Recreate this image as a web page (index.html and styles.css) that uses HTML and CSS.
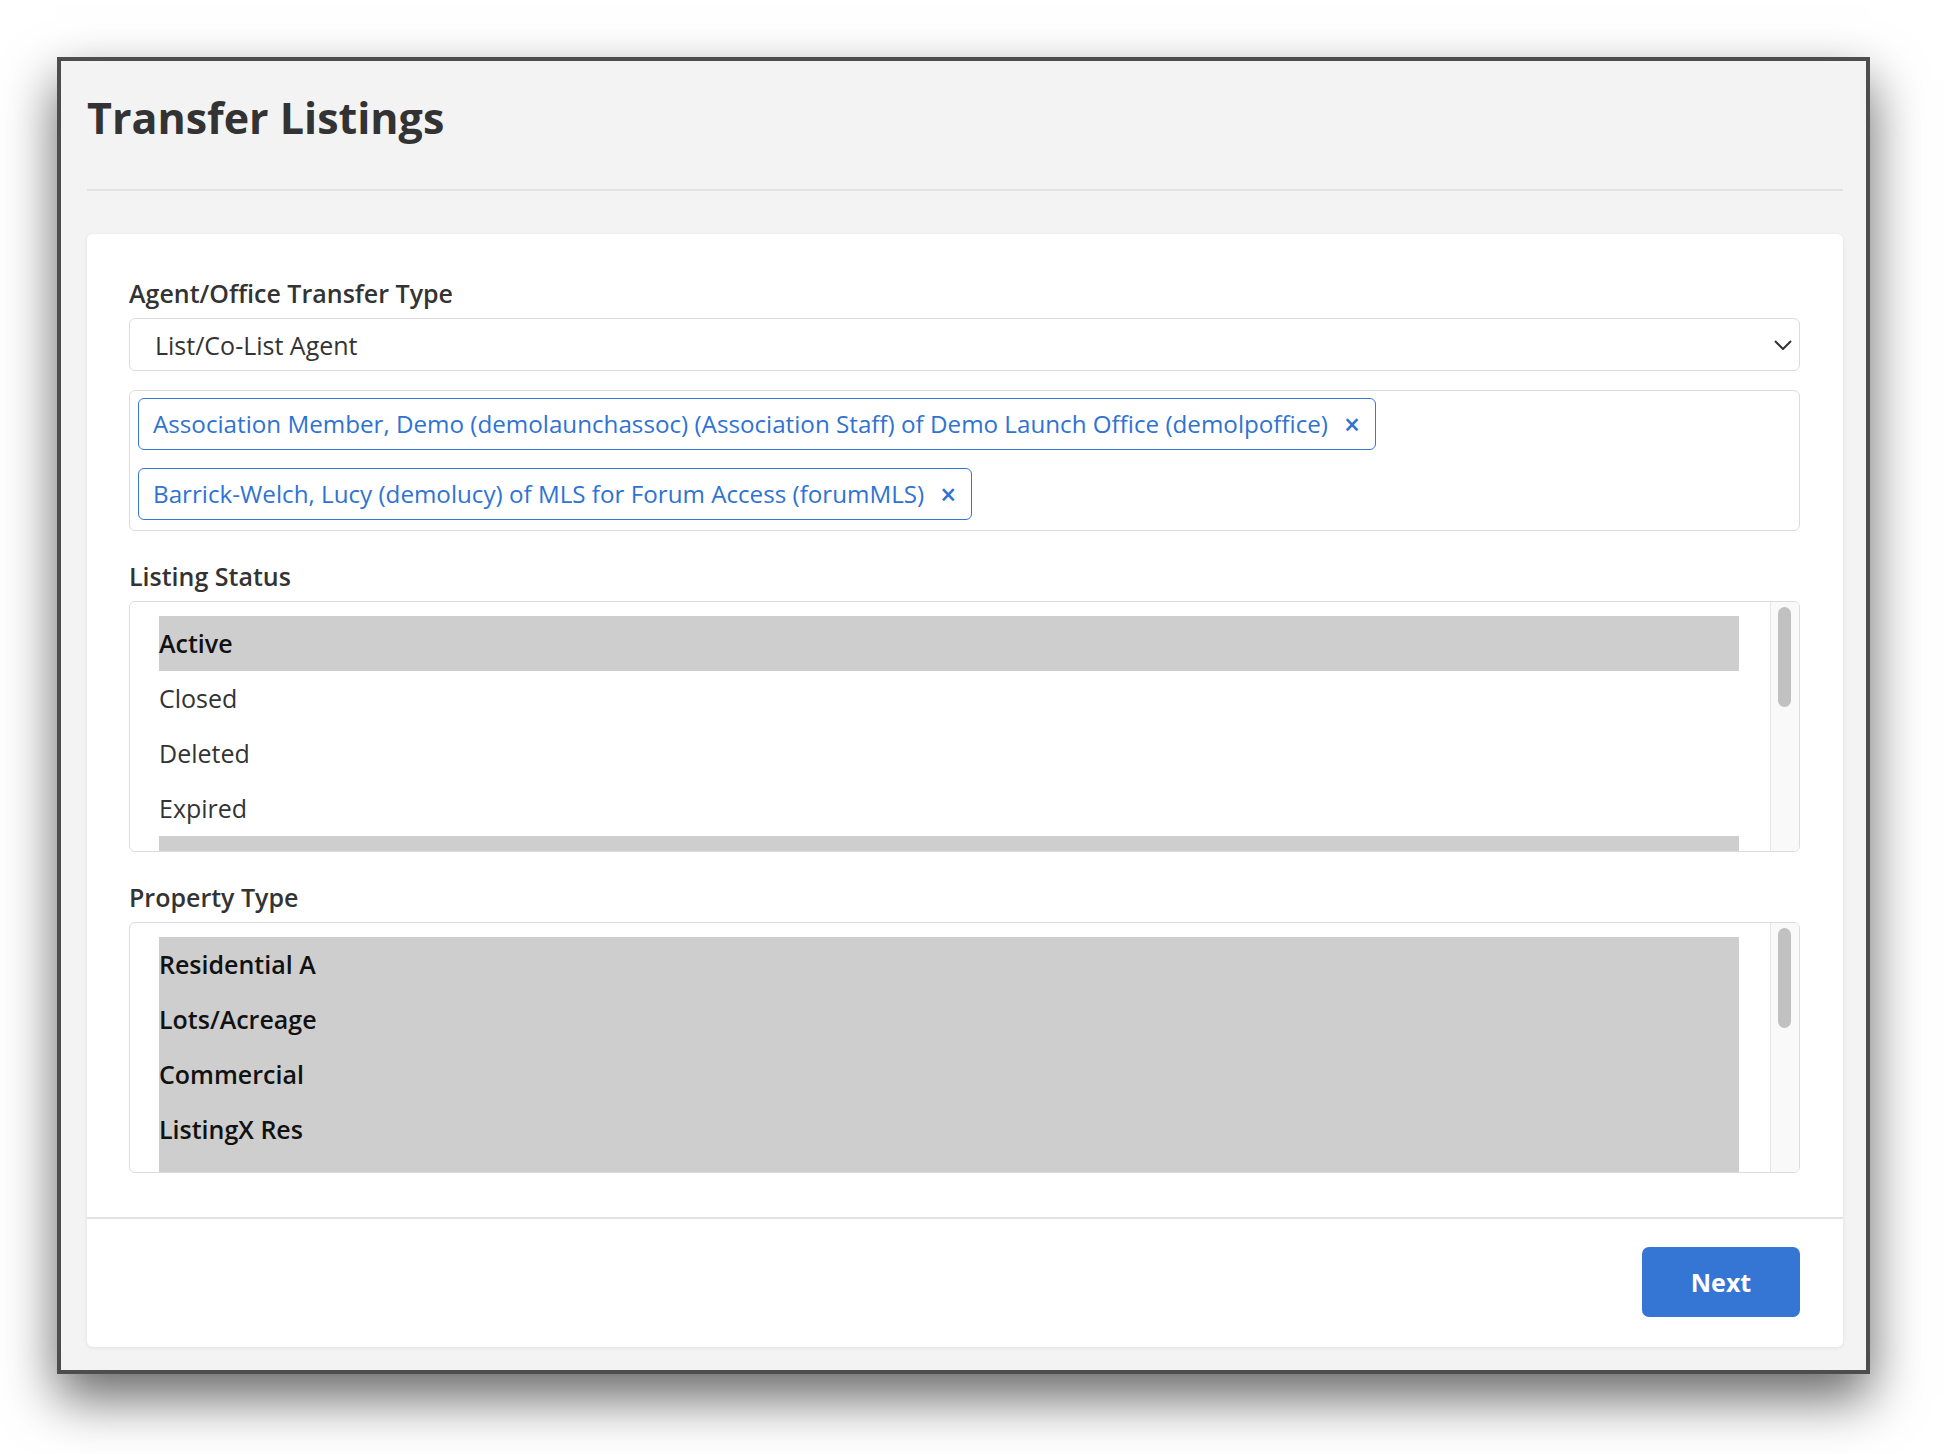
FILE: index.html
```html
<!DOCTYPE html>
<html lang="en">
<head>
<meta charset="UTF-8" />
<title>Transfer Listings</title>
<link rel="stylesheet" href="styles.css">
</head>
<body>
<div class="window">
  <h1 class="page-title">Transfer Listings</h1>
  <div class="divider"></div>

  <div class="card">
    <div class="card-body">
      <!-- тип переноса -->
      <label class="field-label">Agent/Office Transfer Type</label>
      <div class="select">
        <span>List/Co-List Agent</span>
        <svg class="chevron" width="18" height="10" viewBox="0 0 18 10"><path d="M1 1l8 8 8-8" fill="none" stroke="#333" stroke-width="2"/></svg>
      </div>

      <div class="tags">
        <div class="tag"><span>Association Member, Demo (demolaunchassoc) (Association Staff) of Demo Launch Office (demolpoffice)</span><span class="tag-x">&times;</span></div>
        <div class="tag"><span>Barrick-Welch, Lucy (demolucy) of MLS for Forum Access (forumMLS)</span><span class="tag-x">&times;</span></div>
      </div>

      <!-- статусы -->
      <label class="field-label spaced">Listing Status</label>
      <div class="listbox">
        <div class="options">
          <div class="option selected">Active</div>
          <div class="option">Closed</div>
          <div class="option">Deleted</div>
          <div class="option">Expired</div>
          <div class="option selected"></div>
        </div>
        <div class="scroll-track"><div class="scroll-thumb"></div></div>
      </div>

      <!-- типы объектов -->
      <label class="field-label spaced">Property Type</label>
      <div class="listbox">
        <div class="options">
          <div class="option selected">Residential A</div>
          <div class="option selected">Lots/Acreage</div>
          <div class="option selected">Commercial</div>
          <div class="option selected">ListingX Res</div>
          <div class="option selected"></div>
        </div>
        <div class="scroll-track"><div class="scroll-thumb"></div></div>
      </div>
    </div>

    <div class="card-footer">
      <button class="btn-next">Next</button>
    </div>
  </div>
</div>
</body>
</html>
```

FILE: styles.css
```css
/* Общие стили */
html, body {
  margin: 0;
  padding: 0;
  background: #fff;
  font-family: 'Open Sans', Arial, sans-serif;
  color: #333;
}
body {
  padding: 57px;
  box-sizing: border-box;
  height: 1454px;
  overflow: hidden;
}
.window {
  box-sizing: border-box;
  width: 1813px;
  height: 1317px;
  background: #f3f3f3;
  border: 4px solid #4d4d4d;
  box-shadow: 0 24px 50px rgba(0,0,0,0.6);
  padding: 30px 23px 0 26px;
}
.page-title {
  margin: 0;
  font-size: 43px;
  line-height: 54px;
  font-weight: 700;
  color: #333;
}
.divider {
  height: 2px;
  background: #e2e2e2;
  margin: 44px 0 43px;
}

/* карточка */
.card {
  background: #fff;
  border-radius: 6px;
  box-shadow: 0 1px 4px rgba(0,0,0,0.08);
}
.card-body {
  padding: 41px 43px 44px 42px;
}
.field-label {
  display: block;
  font-size: 25px;
  line-height: 36px;
  font-weight: 600;
  color: #333;
  margin-bottom: 7px;
}
.field-label.spaced {
  margin-top: 27px;
  margin-bottom: 7px;
}
.select {
  box-sizing: border-box;
  height: 53px;
  border: 1px solid #dcdcdc;
  border-radius: 6px;
  display: flex;
  align-items: center;
  justify-content: space-between;
  padding: 0 7px 0 25px;
  font-size: 25px;
  color: #333;
}
.chevron { display: block; }

/* выбранные агенты */
.tags {
  margin-top: 19px;
  box-sizing: border-box;
  min-height: 140px;
  border: 1px solid #dcdcdc;
  border-radius: 6px;
  padding: 7px 8px 10px 8px;
  display: flex;
  flex-wrap: wrap;
  align-items: flex-start;
  gap: 18px 10px;
}
.tag {
  box-sizing: border-box;
  height: 52px;
  display: flex;
  align-items: center;
  gap: 16px;
  border: 1.5px solid #3677d4;
  border-radius: 6px;
  padding: 0 15px 1px 14px;
  color: #2f73d2;
  font-size: 24.2px;
  white-space: nowrap;
}
.tag-x {
  font-size: 28px;
  line-height: 1;
  font-weight: 600;
}

/* списки с прокруткой */
.listbox {
  box-sizing: border-box;
  height: 251px;
  border: 1px solid #dcdcdc;
  border-radius: 6px;
  overflow: hidden;
  display: flex;
}
.options {
  flex: 1;
  padding: 14px 31px 0 29px;
}
.option {
  height: 55px;
  line-height: 55px;
  font-size: 25px;
  color: #333;
  white-space: nowrap;
}
.option.selected {
  background: #cecece;
  color: #111;
  font-weight: 600;
}
.scroll-track {
  width: 29px;
  background: #f9f9f9;
  border-left: 1px solid #e6e6e6;
  padding-top: 5px;
  box-sizing: border-box;
}
.scroll-thumb {
  width: 13px;
  height: 100px;
  margin-left: 7px;
  background: #c1c1c1;
  border-radius: 7px;
}

/* футер с кнопкой */
.card-footer {
  border-top: 2px solid #e2e2e2;
  padding: 28px 43px 30px;
  display: flex;
  justify-content: flex-end;
}
.btn-next {
  width: 158px;
  height: 70px;
  border: none;
  border-radius: 7px;
  background: #3576d4;
  color: #fff;
  font-family: 'Open Sans', Arial, sans-serif;
  font-size: 25px;
  font-weight: 700;
  cursor: pointer;
}
```
